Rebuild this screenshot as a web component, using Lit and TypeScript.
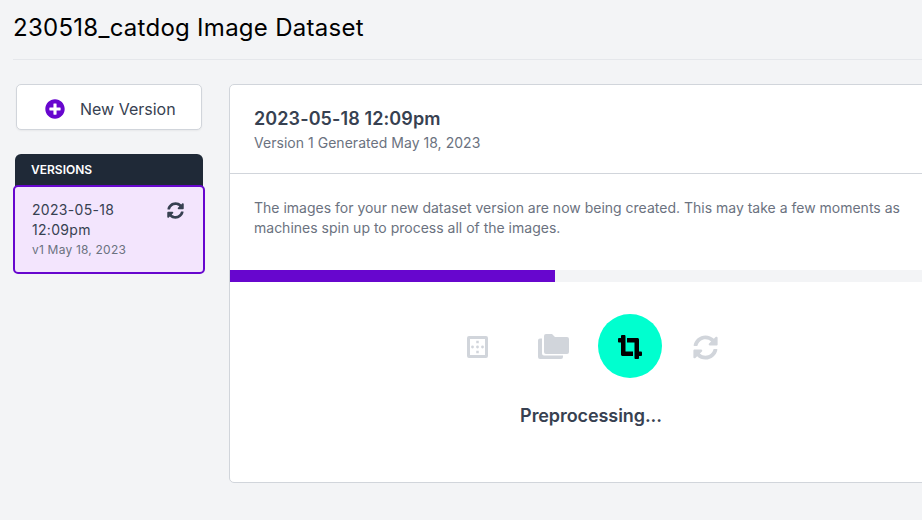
import { LitElement, html, css, svg } from "lit";
import { customElement } from "lit/decorators.js";

const SYNC = svg`<path d="M370.72 133.28C339.458 104.008 298.888 87.962 255.848 88c-77.458.068-144.328 53.178-162.791 126.85-1.344 5.363-6.122 9.15-11.651 9.15H24.103c-7.498 0-13.194-6.807-11.807-14.176C33.933 94.924 134.813 8 256 8c66.448 0 126.791 26.136 171.315 68.685L463.03 40.97C478.149 25.851 504 36.559 504 57.941V192c0 13.255-10.745 24-24 24H345.941c-21.382 0-32.09-25.851-16.971-40.971l41.75-41.749zM32 296h134.059c21.382 0 32.09 25.851 16.971 40.971l-41.75 41.75c31.262 29.273 71.835 45.319 114.876 45.28 77.418-.07 144.315-53.144 162.787-126.849 1.344-5.363 6.122-9.15 11.651-9.15h57.304c7.498 0 13.194 6.807 11.807 14.176C478.067 417.076 377.187 504 256 504c-66.448 0-126.791-26.136-171.315-68.685L48.97 471.03C33.851 486.149 8 475.441 8 454.059V320c0-13.255 10.745-24 24-24z"/>`;
const PLUS = svg`<path d="M256 8C119 8 8 119 8 256s111 248 248 248 248-111 248-248S393 8 256 8zm144 276c0 6.6-5.4 12-12 12h-92v92c0 6.6-5.4 12-12 12h-56c-6.6 0-12-5.4-12-12v-92h-92c-6.6 0-12-5.4-12-12v-56c0-6.6 5.4-12 12-12h92v-92c0-6.6 5.4-12 12-12h56c6.6 0 12 5.4 12 12v92h92c6.6 0 12 5.4 12 12v56z"/>`;
const CROP = svg`<path d="M488 352h-40V96c0-17.67-14.33-32-32-32H192v96h160v328c0 13.25 10.75 24 24 24h48c13.25 0 24-10.75 24-24v-40h40c13.25 0 24-10.75 24-24v-48c0-13.26-10.75-24-24-24zM160 24c0-13.26-10.75-24-24-24H88C74.75 0 64 10.74 64 24v40H24C10.75 64 0 74.74 0 88v48c0 13.25 10.75 24 24 24h40v256c0 17.67 14.33 32 32 32h224v-96H160V24z"/>`;

@customElement("app-root")
export class AppRoot extends LitElement {
  static styles = css`
    :host {
      display: block;
      width: 922px;
      height: 520px;
      overflow: hidden;
      background: #f3f4f6;
      font-family: Inter, "Liberation Sans", sans-serif;
      color: #374151;
    }
    .head {
      margin-left: 13px;
      height: 59px;
      border-bottom: 1px solid #e5e7eb;
      display: flex;
      align-items: flex-start;
    }
    .title {
      font-size: 24px;
      letter-spacing: 0.27px;
      color: #000;
      line-height: 32px;
      margin-top: 12px;
      white-space: nowrap;
    }
    .body {
      display: flex;
      align-items: flex-start;
      padding: 24px 0 0 13px;
    }
    .side {
      width: 192px;
      flex: none;
      display: flex;
      flex-direction: column;
    }
    .new {
      margin: 0 3px;
      height: 46px;
      box-sizing: border-box;
      background: #fff;
      border: 1px solid #d1d5db;
      border-radius: 5px;
      box-shadow: 0 1px 2px rgba(0, 0, 0, 0.05);
      display: flex;
      align-items: center;
      padding: 3px 0 0 28px;
      gap: 15px;
      font-size: 16px;
      color: #374151;
    }
    .new svg {
      width: 20px;
      height: 20px;
      fill: #6706ce;
    }
    .vhead {
      margin: 24px 2px 0;
      height: 32px;
      box-sizing: border-box;
      background: #1f2937;
      border-radius: 6px 6px 0 0;
      color: #fff;
      font-size: 12px;
      font-weight: 600;
      padding: 0 0 2px 16px;
      display: flex;
      align-items: center;
    }
    .vcard {
      margin-top: -1px;
      height: 89px;
      box-sizing: border-box;
      background: #f3e5fd;
      border: 2px solid #6706ce;
      border-radius: 5px;
      padding: 13px 17px;
      display: flex;
      justify-content: space-between;
    }
    .vname {
      font-size: 14px;
      letter-spacing: 0.3px;
      line-height: 20px;
      color: #374151;
    }
    .vsub {
      font-size: 12px;
      letter-spacing: 0.2px;
      line-height: 16px;
      color: #6b7280;
      margin-top: 2px;
    }
    .vcard svg {
      width: 17px;
      height: 17px;
      fill: #374151;
      margin: 2px 2px 0 0;
    }
    .main {
      width: 724px;
      flex: none;
      margin-left: 24px;
      height: 399px;
      box-sizing: border-box;
      background: #fff;
      border: 1px solid #d1d5db;
      border-radius: 5px;
      display: flex;
      flex-direction: column;
    }
    .mhead {
      height: 89px;
      box-sizing: border-box;
      border-bottom: 1px solid #d1d5db;
      padding: 21px 24px 0;
    }
    .mtitle {
      font-size: 18px;
      letter-spacing: 0.1px;
      line-height: 26px;
      font-weight: 600;
      color: #374151;
    }
    .msub {
      font-size: 14px;
      letter-spacing: 0.03px;
      line-height: 20px;
      color: #6b7280;
      margin-top: 1px;
    }
    .msg {
      padding: 24px 24px 0;
      height: 78px;
      box-sizing: border-box;
      font-size: 14px;
      line-height: 20px;
      color: #6b7280;
    }
    .msg div {
      width: 660px;
    }
    .track {
      height: 12px;
      background: #f3f4f6;
      margin-top: 18px;
    }
    .fill {
      height: 100%;
      background: #6706ce;
    }
    .steps {
      display: flex;
      justify-content: center;
      margin-top: 32px;
      padding-left: 2px;
    }
    .step {
      width: 76px;
      height: 64px;
      display: flex;
      align-items: center;
      justify-content: center;
    }
    .step svg {
      fill: #d1d5db;
      margin-top: 2px;
    }
    .step .grid {
      margin-right: 2px;
    }
    .step .folders {
      margin: 1px 2px 0 0;
    }
    .step .sync {
      margin-right: 1px;
    }
    .circle {
      width: 64px;
      height: 64px;
      border-radius: 50%;
      background: #00ffcf;
      display: flex;
      align-items: center;
      justify-content: center;
    }
    .circle svg {
      width: 24px;
      height: 24px;
      fill: #000;
    }
    .status {
      text-align: center;
      font-size: 18px;
      font-weight: 600;
      letter-spacing: -0.08px;
      line-height: 28px;
      color: #374151;
      margin-top: 24px;
    }
  `;

  render() {
    return html`
      <div class="head"><div class="title">230518_catdog Image Dataset</div></div>
      <div class="body">
        <div class="side">
          <div class="new">
            <svg viewBox="0 0 512 512">${PLUS}</svg>
            <span>New Version</span>
          </div>
          <div class="vhead">VERSIONS</div>
          <div class="vcard">
            <div>
              <div class="vname">2023-05-18<br />12:09pm</div>
              <div class="vsub">v1 May 18, 2023</div>
            </div>
            <svg viewBox="0 0 512 512">${SYNC}</svg>
          </div>
        </div>
        <div class="main">
          <div class="mhead">
            <div class="mtitle">2023-05-18 12:09pm</div>
            <div class="msub">Version 1 Generated May 18, 2023</div>
          </div>
          <div class="msg">
            <div>
              The images for your new dataset version are now being created. This may take a few
              moments as machines spin up to process all of the images.
            </div>
          </div>
          <div class="track"><div class="fill" style="width:${(325 / 722) * 100}%"></div></div>
          <div class="steps">
            <div class="step">
              <svg class="grid" width="21" height="22" viewBox="0 0 21 22">
                <path
                  fill-rule="evenodd"
                  d="M2 0h17a2 2 0 0 1 2 2v18a2 2 0 0 1-2 2H2a2 2 0 0 1-2-2V2a2 2 0 0 1 2-2zm1 3v16h15V3z"
                />
                <rect x="9.250" y="4.750" width="2.500" height="2.500" />
                <rect x="9.250" y="14.750" width="2.500" height="2.500" />
                <circle cx="5.500" cy="11" r="1.400" />
                <circle cx="10.500" cy="11" r="1.400" />
                <circle cx="15.500" cy="11" r="1.400" />
              </svg>
            </div>
            <div class="step">
              <svg class="folders" width="31" height="25" viewBox="0 0 31 25">
                <path
                  d="M0 6.500a2 2 0 0 1 2-2h2v15a2 2 0 0 0 2 2h19V23a2 2 0 0 1-2 2H2a2 2 0 0 1-2-2z"
                />
                <path
                  d="M6 2a2 2 0 0 1 2-2h6l3 3h12a2 2 0 0 1 2 2v13a2 2 0 0 1-2 2H8a2 2 0 0 1-2-2z"
                />
              </svg>
            </div>
            <div class="step">
              <div class="circle"><svg viewBox="0 0 512 512">${CROP}</svg></div>
            </div>
            <div class="step">
              <svg class="sync" width="25" height="25" viewBox="0 0 512 512">${SYNC}</svg>
            </div>
          </div>
          <div class="status">Preprocessing...</div>
        </div>
      </div>
    `;
  }
}
